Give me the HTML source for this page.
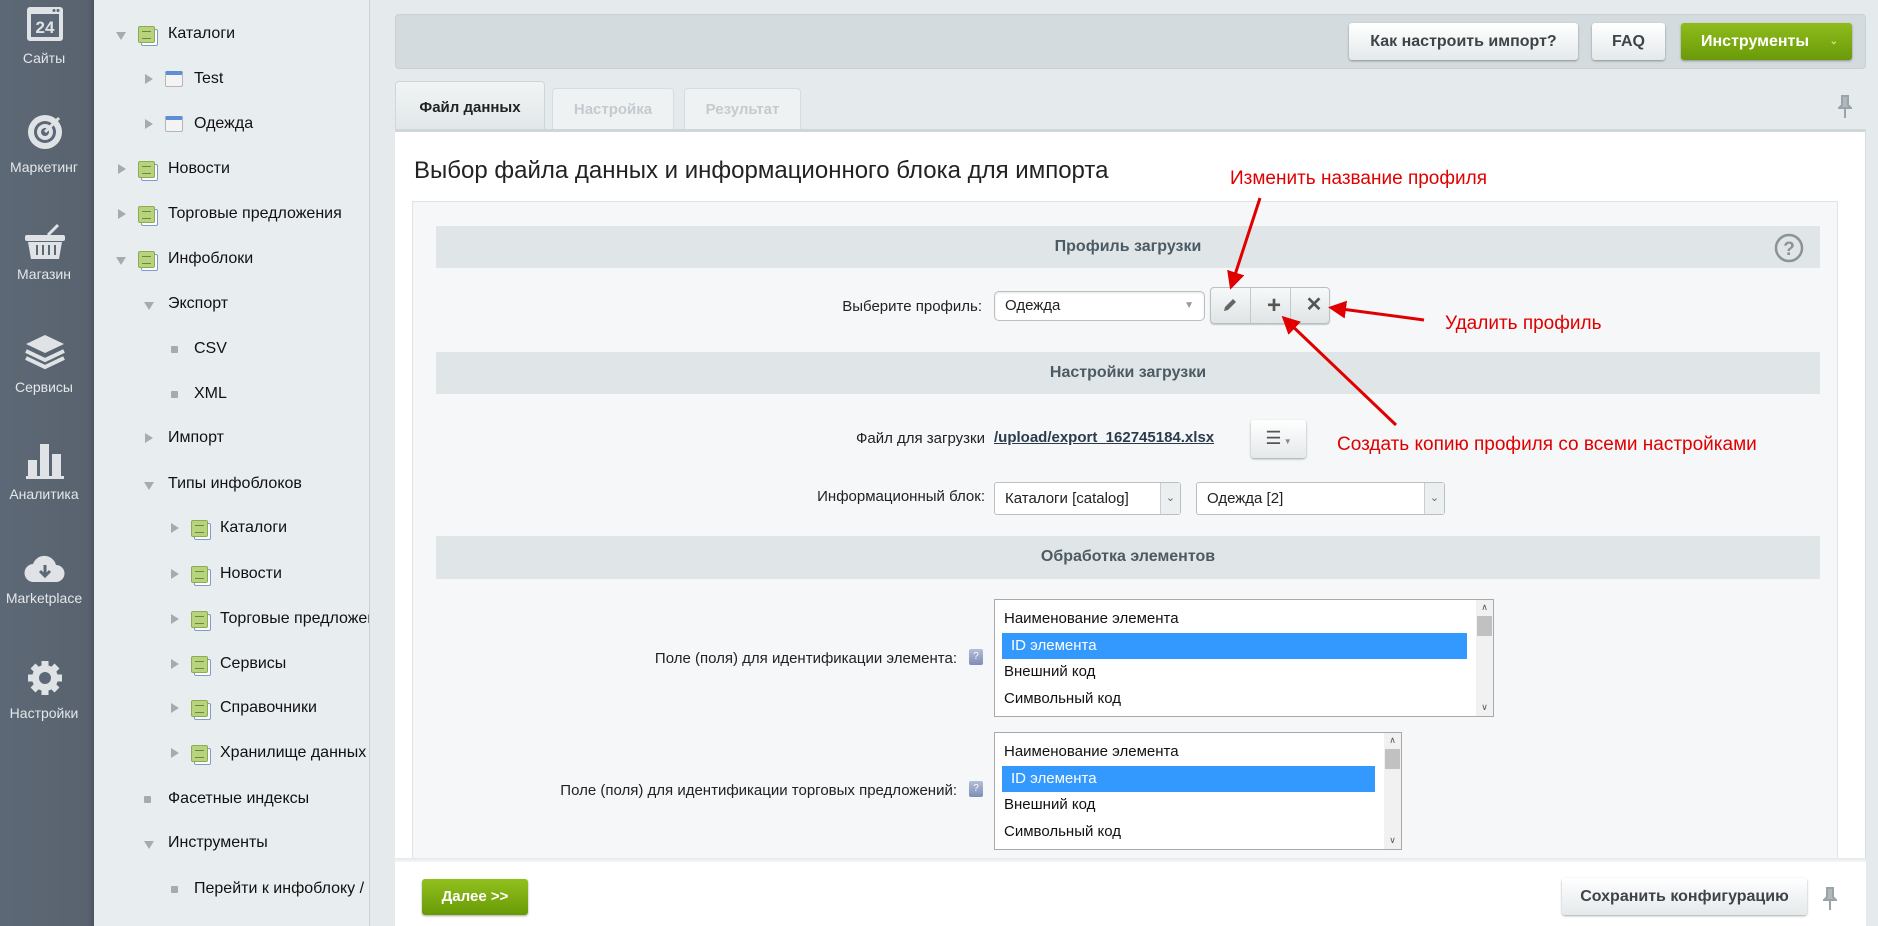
<!DOCTYPE html>
<html><head><meta charset="utf-8"><style>
*{box-sizing:border-box;margin:0;padding:0}
body{width:1878px;height:926px;overflow:hidden;background:#e5ebed;font-family:"Liberation Sans",Arial,sans-serif;position:relative;color:#000}
.a{position:absolute}
#side{left:0;top:0;width:94px;height:926px;background:linear-gradient(90deg,#5d6876 0,#59636f 88px,#4b535d 94px)}
.si{position:absolute;left:0;width:88px;text-align:center;color:#e3e7ea;font-size:14px}
#tree{left:94px;top:0;width:276px;height:926px;background:#e8eef0;border-right:1px solid #c9d2d6}
.ti{position:absolute;font-size:16px;color:#111;white-space:nowrap;line-height:20px}
.arr{position:absolute;width:0;height:0}
.ar{border-left:8px solid #a5acb1;border-top:5px solid transparent;border-bottom:5px solid transparent}
.ad{border-top:8px solid #a5acb1;border-left:5px solid transparent;border-right:5px solid transparent}
.bul{position:absolute;width:7px;height:7px;background:#a5acb1;border-radius:1px}
.ic{position:absolute;width:17px;height:17px;background:#b8d37e;border:1px solid #8eaa52;border-radius:2px;box-shadow:3px 3px 0 -1px #fff,3px 3px 0 0 #7f9bc9}
.ic:before{content:"";position:absolute;left:3px;top:4px;width:9px;height:6px;border-top:1px solid #6b8a34;border-bottom:1px solid #6b8a34}
.ic2{position:absolute;width:18px;height:16px;background:#f3f3f3;border:1px solid #b5b5b5;border-top:4px solid #5c8fd6;border-radius:2px}
.btn{position:absolute;height:37px;border-radius:3px;background:linear-gradient(#fff,#e4e9eb);box-shadow:0 1px 2px rgba(0,0,0,.35);font-weight:bold;font-size:16px;color:#3d4448;text-align:center;line-height:37px}
.sh{position:absolute;left:436px;width:1384px;height:42px;background:#e0e6e8;text-align:center;font-weight:bold;font-size:16px;color:#4b5a63;line-height:42px}
.lbl{position:absolute;font-size:15px;color:#222;text-align:right;white-space:nowrap}
.sel{position:absolute;background:#fff;border:1px solid #b9c0c3;border-radius:3px;font-size:15px;color:#222;padding-left:10px}
.lb{position:absolute;background:#fff;border:1px solid #a9a9a9;font-size:15px;color:#111}
.lb div{height:26.5px;line-height:26px;padding-left:9px}
.lb .s{background:#3399ff;color:#fff;margin:0 7px}
.q{position:absolute;width:14px;height:16px;background:linear-gradient(#b4bed8,#7f8db5);border-radius:2px;color:#fff;font-size:10px;text-align:center;line-height:16px}
.red{position:absolute;color:#e00000;font-size:19px;white-space:nowrap}
</style></head><body>
<div id="side" class="a">
 <svg class="a" style="left:26px;top:6px" width="38" height="36" viewBox="0 0 38 36"><rect x="1" y="1" width="36" height="34" rx="3" fill="#dfe3e6"/><rect x="5" y="8" width="28" height="23" fill="#5d6876"/><circle cx="28" cy="4.5" r="1.5" fill="#5d6876"/><circle cx="32" cy="4.5" r="1.5" fill="#5d6876"/><text x="19" y="27" font-family="Liberation Sans" font-weight="bold" font-size="17" fill="#dfe3e6" text-anchor="middle">24</text></svg>
 <div class="si" style="top:50px">Сайты</div>
 <svg class="a" style="left:26px;top:113px" width="38" height="38" viewBox="0 0 38 38"><circle cx="19" cy="19" r="17" fill="#dfe3e6"/><circle cx="19" cy="19" r="11" fill="#5d6876"/><circle cx="19" cy="19" r="8" fill="#dfe3e6"/><circle cx="19" cy="19" r="4" fill="#5d6876"/><path d="M19 19L33 5" stroke="#dfe3e6" stroke-width="3"/></svg>
 <div class="si" style="top:159px">Маркетинг</div>
 <svg class="a" style="left:24px;top:223px" width="42" height="38" viewBox="0 0 42 38"><path d="M24 12L34 2" stroke="#dfe3e6" stroke-width="3"/><rect x="1" y="12" width="40" height="6" rx="2" fill="#dfe3e6"/><path d="M4 19h34l-3 17H7z" fill="#dfe3e6"/><path d="M13 22v10M19 22v10M25 22v10M31 22v10" stroke="#5d6876" stroke-width="2"/></svg>
 <div class="si" style="top:266px">Магазин</div>
 <svg class="a" style="left:24px;top:333px" width="42" height="38" viewBox="0 0 42 38"><path d="M21 2L40 11 21 20 2 11z" fill="#dfe3e6"/><path d="M2 18l19 9 19-9M2 25l19 9 19-9" stroke="#dfe3e6" stroke-width="4" fill="none"/></svg>
 <div class="si" style="top:379px">Сервисы</div>
 <svg class="a" style="left:25px;top:440px" width="40" height="40" viewBox="0 0 40 40"><rect x="3" y="20" width="9" height="17" fill="#dfe3e6"/><rect x="15" y="4" width="9" height="33" fill="#dfe3e6"/><rect x="27" y="14" width="9" height="23" fill="#dfe3e6"/><rect x="1" y="36" width="38" height="3" fill="#dfe3e6"/></svg>
 <div class="si" style="top:486px">Аналитика</div>
 <svg class="a" style="left:24px;top:552px" width="42" height="32" viewBox="0 0 42 32"><path d="M10 30a9 9 0 0 1-1-18 12 12 0 0 1 23 1 8 8 0 0 1 0 17z" fill="#dfe3e6"/><path d="M21 13v10M16 19l5 5 5-5" stroke="#5d6876" stroke-width="3" fill="none"/></svg>
 <div class="si" style="top:590px">Marketplace</div>
 <svg class="a" style="left:26px;top:659px" width="38" height="38" viewBox="0 0 38 38"><g fill="#dfe3e6"><circle cx="19" cy="19" r="13"/><g stroke="#dfe3e6" stroke-width="7"><path d="M19 2v34M2 19h34M7 7l24 24M31 7L7 31"/></g></g><circle cx="19" cy="19" r="6" fill="#5d6876"/></svg>
 <div class="si" style="top:705px">Настройки</div>
</div>
<div id="tree" class="a"></div>
<div class="arr ad" style="left:116px;top:32px"></div><div class="ic" style="left:138px;top:26px"></div><div class="ti" style="left:168px;top:24px">Каталоги</div>
<div class="arr ar" style="left:145px;top:74px"></div><div class="ic2" style="left:165px;top:71px"></div><div class="ti" style="left:194px;top:69px">Test</div>
<div class="arr ar" style="left:145px;top:119px"></div><div class="ic2" style="left:165px;top:116px"></div><div class="ti" style="left:194px;top:114px">Одежда</div>
<div class="arr ar" style="left:118px;top:164px"></div><div class="ic" style="left:138px;top:161px"></div><div class="ti" style="left:168px;top:159px">Новости</div>
<div class="arr ar" style="left:118px;top:209px"></div><div class="ic" style="left:138px;top:206px"></div><div class="ti" style="left:168px;top:204px">Торговые предложения</div>
<div class="arr ad" style="left:116px;top:257px"></div><div class="ic" style="left:138px;top:251px"></div><div class="ti" style="left:168px;top:249px">Инфоблоки</div>
<div class="arr ad" style="left:144px;top:302px"></div><div class="ti" style="left:168px;top:294px">Экспорт</div>
<div class="bul" style="left:171px;top:346px"></div><div class="ti" style="left:194px;top:339px">CSV</div>
<div class="bul" style="left:171px;top:391px"></div><div class="ti" style="left:194px;top:384px">XML</div>
<div class="arr ar" style="left:145px;top:433px"></div><div class="ti" style="left:168px;top:428px">Импорт</div>
<div class="arr ad" style="left:144px;top:482px"></div><div class="ti" style="left:168px;top:474px">Типы инфоблоков</div>
<div class="arr ar" style="left:171px;top:523px"></div><div class="ic" style="left:191px;top:520px"></div><div class="ti" style="left:220px;top:518px">Каталоги</div>
<div class="arr ar" style="left:171px;top:569px"></div><div class="ic" style="left:191px;top:566px"></div><div class="ti" style="left:220px;top:564px">Новости</div>
<div class="arr ar" style="left:171px;top:614px"></div><div class="ic" style="left:191px;top:611px"></div><div class="ti" style="left:220px;top:609px;width:149px;overflow:hidden">Торговые предложения</div>
<div class="arr ar" style="left:171px;top:659px"></div><div class="ic" style="left:191px;top:656px"></div><div class="ti" style="left:220px;top:654px">Сервисы</div>
<div class="arr ar" style="left:171px;top:703px"></div><div class="ic" style="left:191px;top:700px"></div><div class="ti" style="left:220px;top:698px">Справочники</div>
<div class="arr ar" style="left:171px;top:748px"></div><div class="ic" style="left:191px;top:745px"></div><div class="ti" style="left:220px;top:743px;width:149px;overflow:hidden">Хранилище данных</div>
<div class="bul" style="left:144px;top:796px"></div><div class="ti" style="left:168px;top:789px">Фасетные индексы</div>
<div class="arr ad" style="left:144px;top:841px"></div><div class="ti" style="left:168px;top:833px">Инструменты</div>
<div class="bul" style="left:171px;top:886px"></div><div class="ti" style="left:194px;top:879px;width:175px;overflow:hidden">Перейти к инфоблоку /</div>

<div class="a" style="left:395px;top:14px;width:1471px;height:55px;background:#d3dbde;border-radius:4px;border:1px solid #c9d1d4"></div>
<div class="btn" style="left:1349px;top:23px;width:229px">Как настроить импорт?</div>
<div class="btn" style="left:1592px;top:23px;width:73px">FAQ</div>
<div class="btn" style="left:1681px;top:23px;width:171px;background:linear-gradient(#8fbc1c,#6a9a08);color:#fff;text-align:left;padding-left:20px">Инструменты<span style="position:absolute;right:14px;top:0;font-size:10px;color:#c8e18a">&#8964;</span></div>
<div class="a" style="left:395px;top:81px;width:150px;height:49px;background:linear-gradient(#f1f4f5,#e1e7e9);border:1px solid #ced6d9;border-bottom:none;border-radius:4px 4px 0 0;font-weight:bold;font-size:15px;color:#222;text-align:center;line-height:52px">Файл данных</div>
<div class="a" style="left:552px;top:88px;width:122px;height:42px;background:#eef2f3;border:1px solid #d6dde0;border-bottom:none;border-radius:4px 4px 0 0;font-weight:bold;font-size:15px;color:#c4cbce;text-align:center;line-height:42px">Настройка</div>
<div class="a" style="left:684px;top:88px;width:117px;height:42px;background:#eef2f3;border:1px solid #d6dde0;border-bottom:none;border-radius:4px 4px 0 0;font-weight:bold;font-size:15px;color:#c4cbce;text-align:center;line-height:42px">Результат</div>
<svg class="a" style="left:1838px;top:95px" width="14" height="24" viewBox="0 0 14 24"><path d="M3 1h8M4 1v9l-3 3h12l-3-3V1M7 13v10" stroke="#9aa3a8" stroke-width="2" fill="#b0b8bc"/></svg>
<div class="a" style="left:395px;top:129px;width:1471px;height:731px;background:#fff;border-top:3px solid #cfd6d9;border-right:1px solid #d6dde0"></div>
<div class="a" style="left:414px;top:157px;font-size:24px;color:#222">Выбор файла данных и информационного блока для импорта</div>
<div class="a" style="left:412px;top:201px;width:1426px;height:659px;background:#f5f7f8;border:1px solid #dde3e6;border-bottom:none"></div>
<div class="sh" style="top:226px">Профиль загрузки</div>
<svg class="a" style="left:1774px;top:233px" width="30" height="30" viewBox="0 0 30 30"><circle cx="15" cy="15" r="13" stroke="#8c9396" stroke-width="2.5" fill="none"/><text x="15" y="22" font-family="Liberation Sans" font-weight="bold" font-size="19" fill="#8c9396" text-anchor="middle">?</text></svg>
<div class="lbl" style="right:896px;top:298px">Выберите профиль:</div>
<div class="sel" style="left:994px;top:291px;width:211px;height:30px;line-height:28px;border-radius:5px;box-shadow:inset 0 1px 2px rgba(0,0,0,.1)">Одежда<span style="position:absolute;right:10px;top:0;font-size:10px;color:#999">&#9660;</span></div>
<div class="a" style="left:1210px;top:287px;width:120px;height:37px;border:1px solid #b9c0c3;border-radius:4px;background:linear-gradient(#f7f9f9,#dfe4e6);box-shadow:0 1px 1px rgba(0,0,0,.2)"></div>
<div class="a" style="left:1250px;top:288px;width:1px;height:35px;background:#c2c9cc"></div>
<div class="a" style="left:1290px;top:288px;width:1px;height:35px;background:#c2c9cc"></div>
<svg class="a" style="left:1221px;top:296px" width="18" height="18" viewBox="0 0 18 18"><path d="M3 15l1-4 8-8 3 3-8 8z" fill="#666"/></svg>
<div class="a" style="left:1258px;top:288px;width:32px;height:35px;text-align:center;font-size:24px;font-weight:bold;color:#555;line-height:35px">+</div>
<div class="a" style="left:1298px;top:288px;width:32px;height:35px;text-align:center;font-size:20px;font-weight:bold;color:#555;line-height:35px">&#10005;</div>
<div class="sh" style="top:352px">Настройки загрузки</div>
<div class="lbl" style="right:893px;top:430px">Файл для загрузки</div>
<div class="a" style="left:994px;top:429px;font-size:15px;font-weight:bold;color:#2c3b4c;text-decoration:underline">/upload/export_162745184.xlsx</div>
<div class="btn" style="left:1251px;top:420px;width:55px;height:38px;line-height:36px;font-size:18px;color:#555;font-weight:normal">&#9776;<span style="font-size:8px;color:#888"> &#9660;</span></div>
<div class="lbl" style="right:893px;top:488px">Информационный блок:</div>
<div class="sel" style="left:994px;top:482px;width:187px;height:33px;line-height:31px">Каталоги [catalog]<span style="position:absolute;right:0;top:0;width:20px;height:31px;background:#eceff0;border-left:1px solid #c8cfd2;text-align:center;font-size:11px;color:#666">&#8964;</span></div>
<div class="sel" style="left:1196px;top:482px;width:249px;height:33px;line-height:31px">Одежда [2]<span style="position:absolute;right:0;top:0;width:20px;height:31px;background:#eceff0;border-left:1px solid #c8cfd2;text-align:center;font-size:11px;color:#666">&#8964;</span></div>
<div class="sh" style="top:536px;height:43px">Обработка элементов</div>
<div class="lbl" style="right:921px;top:650px">Поле (поля) для идентификации элемента:</div>
<div class="q" style="left:969px;top:649px">?</div>
<div class="lb" style="left:994px;top:599px;width:500px;height:118px;padding-top:6px"><div>Наименование элемента</div><div class="s" style="margin-right:26px">ID элемента</div><div>Внешний код</div><div>Символьный код</div>
<div style="position:absolute;right:0;top:0;width:17px;height:116px;background:#f1f1f1;padding:0"><div style="height:14px;line-height:14px;font-size:9px;text-align:center;padding:0;color:#555">&#8743;</div><div style="height:20px;background:#c1c1c1;margin:2px 1px;padding:0"></div><div style="position:absolute;bottom:2px;width:17px;height:14px;line-height:14px;font-size:9px;text-align:center;padding:0;color:#555">&#8744;</div></div></div>
<div class="lbl" style="right:921px;top:782px">Поле (поля) для идентификации торговых предложений:</div>
<div class="q" style="left:969px;top:781px">?</div>
<div class="lb" style="left:994px;top:732px;width:408px;height:118px;padding-top:6px"><div>Наименование элемента</div><div class="s" style="margin-right:26px">ID элемента</div><div>Внешний код</div><div>Символьный код</div>
<div style="position:absolute;right:0;top:0;width:17px;height:116px;background:#f1f1f1;padding:0"><div style="height:14px;line-height:14px;font-size:9px;text-align:center;padding:0;color:#555">&#8743;</div><div style="height:20px;background:#c1c1c1;margin:2px 1px;padding:0"></div><div style="position:absolute;bottom:2px;width:17px;height:14px;line-height:14px;font-size:9px;text-align:center;padding:0;color:#555">&#8744;</div></div></div>
<div class="a" style="left:395px;top:858px;width:1471px;height:6px;background:linear-gradient(#e3e8ea,#fff)"></div>
<div class="a" style="left:395px;top:862px;width:1471px;height:64px;background:#fff"></div>
<div class="btn" style="left:422px;top:879px;width:106px;height:36px;line-height:36px;background:linear-gradient(#92c01e,#689a06);color:#fff;font-size:15px">Далее &gt;&gt;</div>
<div class="btn" style="left:1562px;top:878px;width:245px;height:37px;font-size:16px">Сохранить конфигурацию</div>
<svg class="a" style="left:1823px;top:887px" width="14" height="24" viewBox="0 0 14 24"><path d="M3 1h8M4 1v9l-3 3h12l-3-3V1M7 13v10" stroke="#9aa3a8" stroke-width="2" fill="#b0b8bc"/></svg>
<div class="red" style="left:1230px;top:168px">Изменить название профиля</div>
<div class="red" style="left:1445px;top:313px">Удалить профиль</div>
<div class="red" style="left:1337px;top:434px">Создать копию профиля со всеми настройками</div>
<svg class="a" style="left:0;top:0" width="1878" height="926" viewBox="0 0 1878 926">
<defs><marker id="m" markerWidth="6" markerHeight="6" refX="4" refY="3" orient="auto" markerUnits="strokeWidth"><path d="M0 0L6 3 0 6z" fill="#e00000"/></marker></defs>
<g stroke="#e00000" stroke-width="3" fill="none" marker-end="url(#m)">
<path d="M1260 198L1232 284"/>
<path d="M1424 320L1334 308"/>
<path d="M1396 425L1286 320"/>
</g></svg>
</body></html>
